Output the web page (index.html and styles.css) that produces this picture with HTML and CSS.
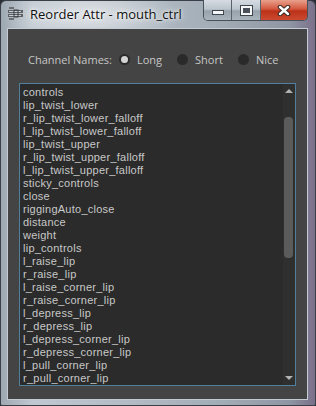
FILE: index.html
```html
<!DOCTYPE html>
<html lang="en">

<head>
    <meta charset="UTF-8">
    <meta name="viewport" content="width=device-width, initial-scale=1.0">
    <title>Reorder Attr - mouth_ctrl</title>
    <link rel="stylesheet" href="styles.css">
</head>

<body>
    <div class="window">
        <div class="titlebar">
            <svg class="app-icon" width="15" height="15" viewBox="0 0 15 15">
                <rect x="1" y="1" width="5" height="2" fill="#6b6f73" />
                <rect x="0" y="4" width="15" height="3" fill="#5d6165" />
                <rect x="1" y="5" width="12" height="1" fill="#c9ced2" />
                <rect x="0" y="8" width="15" height="3" fill="#5d6165" />
                <rect x="1" y="9" width="12" height="1" fill="#c9ced2" />
                <rect x="6" y="4" width="4" height="7" fill="none" stroke="#3d4144" stroke-width="1" />
                <rect x="1" y="12" width="5" height="2" fill="#6b6f73" />
            </svg>
            <div class="title">Reorder Attr - mouth_ctrl</div>
            <div class="caption-buttons">
                <div class="cap-btn cap-min"><span class="glyph-min"></span></div>
                <div class="cap-btn cap-max"><span class="glyph-max"></span></div>
                <div class="cap-btn cap-close">
                    <svg width="14" height="11" viewBox="0 0 14 11">
                        <path d="M3 2 L11 9 M11 2 L3 9" stroke="#3a2a26" stroke-width="4.5" stroke-linecap="round" />
                        <path d="M3 2 L11 9 M11 2 L3 9" stroke="#ffffff" stroke-width="2.4" stroke-linecap="round" />
                    </svg>
                </div>
            </div>
        </div>

        <div class="client">
            <div class="channel-row">
                <span class="label">Channel Names:</span>
                <label class="radio"><span class="dot checked"></span>Long</label>
                <label class="radio"><span class="dot"></span>Short</label>
                <label class="radio"><span class="dot"></span>Nice</label>
            </div>

            <div class="attr-list">
                <ul class="items">
                    <li>controls</li>
                    <li>lip_twist_lower</li>
                    <li>r_lip_twist_lower_falloff</li>
                    <li>l_lip_twist_lower_falloff</li>
                    <li>lip_twist_upper</li>
                    <li>r_lip_twist_upper_falloff</li>
                    <li>l_lip_twist_upper_falloff</li>
                    <li>sticky_controls</li>
                    <li>close</li>
                    <li>riggingAuto_close</li>
                    <li>distance</li>
                    <li>weight</li>
                    <li>lip_controls</li>
                    <li>l_raise_lip</li>
                    <li>r_raise_lip</li>
                    <li>l_raise_corner_lip</li>
                    <li>r_raise_corner_lip</li>
                    <li>l_depress_lip</li>
                    <li>r_depress_lip</li>
                    <li>l_depress_corner_lip</li>
                    <li>r_depress_corner_lip</li>
                    <li>l_pull_corner_lip</li>
                    <li>r_pull_corner_lip</li>
                </ul>
                <div class="scrollbar">
                    <div class="arrow"><span class="tri-up"></span></div>
                    <div class="track"><div class="thumb"></div></div>
                    <div class="arrow"><span class="tri-down"></span></div>
                </div>
            </div>
        </div>
    </div>
</body>

</html>
```

FILE: styles.css
```css
body {
    margin: 0;
    background-color: #2a2d33;
    font-family: "Open Sans", "DejaVu Sans", sans-serif;
}

.window {
    width: 316px;
    height: 406px;
    box-sizing: border-box;
    border: 1px solid #3b4048;
    border-radius: 6px 6px 2px 2px;
    background:
        radial-gradient(ellipse 90px 30px at 90px 14px, rgba(255, 255, 255, 0.55), rgba(255, 255, 255, 0) 100%),
        linear-gradient(to right, #9ea8b2 0%, #bfc8d0 10%, #b3bcc5 40%, #a2acb6 70%, #8e96a3 92%, #7b6f8a 100%);
    display: flex;
    flex-direction: column;
}

.titlebar {
    height: 28px;
    display: flex;
    align-items: flex-start;
    padding-left: 7px;
}

.app-icon {
    margin-top: 5px;
}

.title {
    margin-left: 7px;
    margin-top: 4px;
    font-family: "Open Sans", sans-serif;
    font-size: 13px;
    color: #111;
    text-shadow: 0 0 6px rgba(255, 255, 255, 0.9), 0 0 3px rgba(255, 255, 255, 0.9);
}

.caption-buttons {
    margin-left: auto;
    margin-right: 7px;
    margin-top: -1px;
    display: flex;
    height: 20px;
    border: 1px solid #4a5058;
    border-top: none;
    border-radius: 0 0 5px 5px;
    overflow: hidden;
}

.cap-btn {
    display: flex;
    align-items: center;
    justify-content: center;
    height: 20px;
}

.cap-min,
.cap-max {
    width: 27px;
    border-right: 1px solid #5a626b;
    background: linear-gradient(to bottom, #d6dce2 0%, #bcc5cd 45%, #98a3ad 55%, #aab4bd 100%);
}

.cap-max {
    width: 28px;
}

.cap-close {
    width: 46px;
    background: linear-gradient(to bottom, #e8a08c 0%, #d4583f 45%, #bb3219 55%, #cc4a30 100%);
}

.glyph-min {
    width: 10px;
    height: 3px;
    margin-top: 5px;
    background-color: #f4f6f8;
    border: 1px solid #3f454c;
}

.glyph-max {
    width: 7px;
    height: 5px;
    background-color: #4a5058;
    border: 2px solid #f4f6f8;
    outline: 1px solid #3f454c;
}

.client {
    margin: 0 7px 5px 6px;
    flex: 1;
    background-color: #444444;
    border: 1px solid #c3ccd4;
    display: flex;
    flex-direction: column;
    padding: 0 11px 13px 11px;
}

.channel-row {
    margin-top: 22px;
    height: 16px;
    display: flex;
    align-items: center;
    padding-left: 9px;
    font-size: 11px;
    color: #c6c6c6;
}

.label {
    margin-right: 7px;
}

.radio {
    display: flex;
    align-items: center;
    margin-right: 15px;
}

.dot {
    width: 11px;
    height: 11px;
    border-radius: 50%;
    background-color: #2a2a2a;
    margin-right: 7px;
    display: flex;
    align-items: center;
    justify-content: center;
}

.dot.checked::after {
    content: "";
    width: 7px;
    height: 7px;
    border-radius: 50%;
    background-color: #d4d4d4;
}

.attr-list {
    margin-top: 16px;
    flex: 1;
    border: 1px solid #527f9c;
    background-color: #2b2b2b;
    display: flex;
    overflow: hidden;
}

.items {
    flex: 1;
    list-style: none;
    margin: 0;
    padding: 2px 0 0 3px;
    font-family: "Liberation Sans", Arial, sans-serif;
    font-size: 11px;
    letter-spacing: 0.25px;
    color: #c8c8c8;
}

.items li {
    height: 13px;
    line-height: 13px;
    white-space: nowrap;
}

.scrollbar {
    width: 12px;
    background-color: #2f2f2f;
    display: flex;
    flex-direction: column;
}

.arrow {
    height: 14px;
    display: flex;
    align-items: center;
    justify-content: center;
}

.tri-up {
    border-left: 4px solid transparent;
    border-right: 4px solid transparent;
    border-bottom: 4px solid #b2b2b2;
}

.tri-down {
    border-left: 4px solid transparent;
    border-right: 4px solid transparent;
    border-top: 4px solid #b2b2b2;
}

.track {
    flex: 1;
    padding: 19px 1px 0 1px;
}

.thumb {
    width: 9px;
    height: 141px;
    border-radius: 4px;
    background-color: #5b5b5b;
}
```
